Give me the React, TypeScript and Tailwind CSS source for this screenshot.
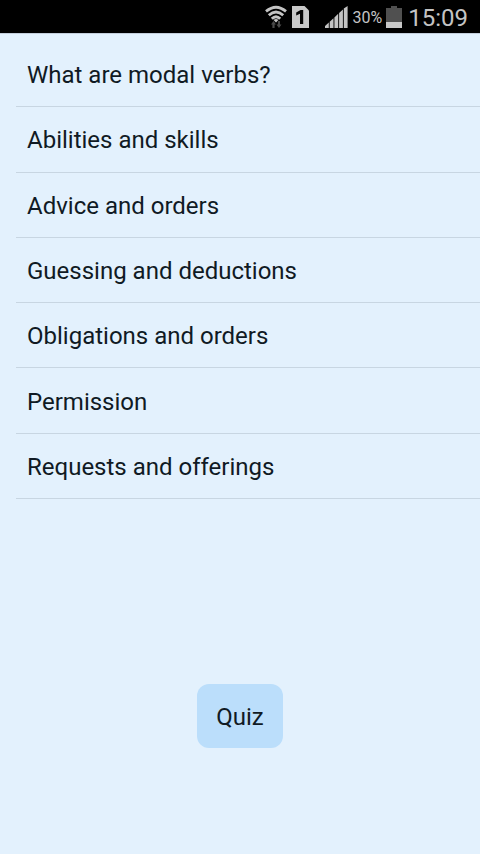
const topics = [
  'What are modal verbs?',
  'Abilities and skills',
  'Advice and orders',
  'Guessing and deductions',
  'Obligations and orders',
  'Permission',
  'Requests and offerings',
];

function WifiIcon() {
  return (
    <svg className="w-6 h-6" viewBox="0 0 24 24" fill="none" aria-hidden="true">
      <g stroke="#c4c4c4" strokeWidth="2.8">
        <path d="M2 6.4Q12 -2 22 6.4" />
        <path d="M4.8 10.2Q12 3.8 19.2 10.2" />
        <path d="M7.8 13.8Q12 9.6 16.2 13.8" />
      </g>
      <path d="M9.6 15Q12 13 14.4 15L12 17.4z" fill="#c4c4c4" />
      <path d="M7 19.5L9.5 16l2.5 3.5h-1.4V23H8.4v-3.5zM12.4 19.5h1.5V16H16v3.5h1.5L15 23z" fill="#4a4a4a" />
    </svg>
  );
}

function SimIcon() {
  return (
    <svg className="w-[17px] h-[22px]" viewBox="0 0 17 22" aria-hidden="true">
      <path d="M0 0h12.5L17 4.5V22H0z" fill="#c8c8c8" />
      <path d="M4.2 6.4L8.6 4h2.6v14H8V7.8L4.2 9.4z" fill="#050505" />
    </svg>
  );
}

function SignalIcon() {
  return (
    <svg className="w-[23px] h-[22px]" viewBox="0 0 23 22" fill="#c4c4c4" aria-hidden="true">
      <path d="M0 20l3.8-3.4V22H0zM4.7 15.8l3.8-3.6V22H4.7zM9.4 11.4l3.8-3.6V22H9.4zM14.1 7l3.8-3.4V22h-3.8zM18.8 2.6L22.6 0v22h-3.8z" />
    </svg>
  );
}

function BatteryIcon() {
  return (
    <svg className="w-4 h-[22px]" viewBox="0 0 16 22" aria-hidden="true">
      <path d="M5 0h6v2h5v14H0V2h5z" fill="#505050" />
      <path d="M0 16h16v6H0z" fill="#c8c8c8" />
    </svg>
  );
}

function StatusBar() {
  return (
    <header className="flex h-[33px] items-center justify-end bg-black pr-3 text-[#c4c4c4]">
      <WifiIcon />
      <div className="ml-1 flex items-center gap-4">
        <SimIcon />
        <SignalIcon />
      </div>
      <span className="ml-[5px] pt-[2px] text-base">30%</span>
      <div className="ml-1 flex items-center gap-[6px]">
        <BatteryIcon />
        <span className="pt-[2px] text-2xl">15:09</span>
      </div>
    </header>
  );
}

export default function App() {
  return (
    <div className="flex min-h-screen flex-col bg-[#e3f1fd] font-['Roboto',sans-serif] text-[#101a24]">
      <StatusBar />
      <div className="h-px bg-[#c3cedb]" />
      <main className="flex flex-1 flex-col pt-2">
        <ul className="ml-4 grid min-h-[457px] auto-rows-fr">
          {topics.map((topic) => (
            <li key={topic} className="flex border-b border-[#c8d6e2]">
              <button type="button" className="w-full px-[11px] pt-[2px] text-left text-2xl">
                {topic}
              </button>
            </li>
          ))}
        </ul>
        <div className="flex flex-1 items-end justify-center pb-[106px]">
          <button type="button" className="rounded-xl bg-[#bbdefb] px-[19px] pt-[17px] pb-[15px] text-2xl">
            Quiz
          </button>
        </div>
      </main>
    </div>
  );
}
